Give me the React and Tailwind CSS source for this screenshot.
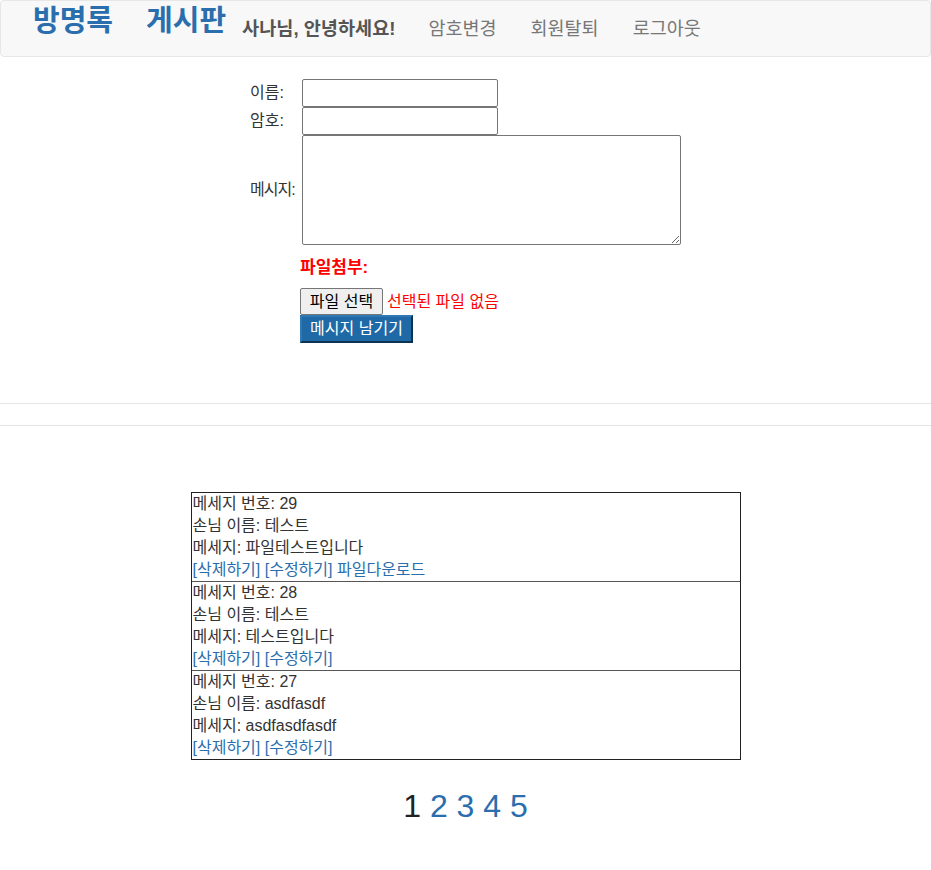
import React from 'react';

const font = { fontFamily: '"Liberation Sans", "Noto Sans CJK KR", sans-serif' };

const posts = [
  { id: 29, name: '테스트', msg: '파일테스트입니다', file: true },
  { id: 28, name: '테스트', msg: '테스트입니다', file: false },
  { id: 27, name: 'asdfasdf', msg: 'asdfasdfasdf', file: false },
];

export default function App() {
  return (
    <div className="min-h-[870px] bg-white text-[#333]" style={font}>
      <nav className="flex h-[57px] items-center rounded border border-[#e7e7e7] bg-[#f8f8f8] pl-[32px]">
        <a className="-mt-[13px] text-[29px] font-bold text-[#2a6ead]">방명록</a>
        <a className="-mt-[13px] ml-[33px] text-[29px] font-bold text-[#2a6ead]">게시판</a>
        <span className="ml-[16px] text-[18.6px] font-bold text-[#555]">사나님, 안녕하세요!</span>
        <a className="ml-[33px] text-[18.5px] text-[#777]">암호변경</a>
        <a className="ml-[34px] text-[18.5px] text-[#777]">회원탈퇴</a>
        <a className="ml-[34px] text-[18.5px] text-[#777]">로그아웃</a>
      </nav>

      <div className="mx-auto mt-[22px] w-[431px] text-[16px]">
        <div className="grid grid-cols-[50px_1fr] items-center">
          <label>이름:</label>
          <input className="ml-[2px] h-[28px] w-[196px] rounded-[2px] border border-[#767676]" />
          <label>암호:</label>
          <input type="password" className="ml-[2px] h-[28px] w-[196px] rounded-[2px] border border-[#767676]" />
          <label className="tracking-[-1px]">메시지:</label>
          <textarea className="ml-[2px] block h-[110px] w-[379px] rounded-[2px] border border-[#767676]" />
          <div />
          <div className="pt-[10px]">
            <div className="h-[22px] text-[17px] font-bold text-[#ff0000]">파일첨부:</div>
            <div className="mt-[11px] flex items-center">
              <button className="h-[27px] w-[83px] rounded-[2px] border border-[#767676] bg-[#efefef] text-black">파일 선택</button>
              <span className="ml-[4px] text-[#ff0000]">선택된 파일 없음</span>
            </div>
            <button className="h-[28px] w-[113px] border-2 border-t-[#2f78b4] border-l-[#2f78b4] border-r-[#0d3350] border-b-[#0d3350] bg-[#1f6aa6] text-white">
              메시지 남기기
            </button>
          </div>
        </div>
      </div>

      <hr className="mt-[60px] border-t border-[#e5e5e5]" />
      <hr className="mt-[21px] border-t border-[#e5e5e5]" />

      <div className="mx-auto mt-[66px] w-[550px] border border-[#222] text-[16px] leading-[22px]">
        {posts.map((p, i) => (
          <div key={p.id} className={`pl-[1px] ${i > 0 ? 'border-t border-[#555]' : ''}`}>
            <div>메세지 번호: {p.id}</div>
            <div>손님 이름: {p.name}</div>
            <div>메세지: {p.msg}</div>
            <div className="text-[#2a6ead]">
              <a>[삭제하기]</a> <a>[수정하기]</a>
              {p.file && <> <a>파일다운로드</a></>}
            </div>
          </div>
        ))}
      </div>

      <div className="mt-[28px] text-center text-[32px] leading-[36px]">
        <span className="text-[#222]">1</span> <a className="text-[#2a6ead]">2</a> <a className="text-[#2a6ead]">3</a>{' '}
        <a className="text-[#2a6ead]">4</a> <a className="text-[#2a6ead]">5</a>
      </div>
    </div>
  );
}
